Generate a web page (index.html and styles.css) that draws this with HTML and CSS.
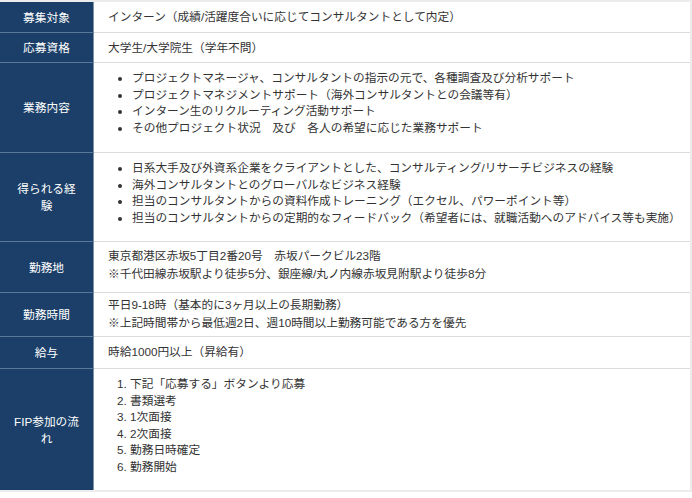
FILE: index.html
```html
<!DOCTYPE html>
<html lang="ja">
<head>
<meta charset="utf-8">
<link rel="stylesheet" href="styles.css">
</head>
<body>
<table class="recruit">
  <tr>
    <th>募集対象</th>
    <td>インターン（成績/活躍度合いに応じてコンサルタントとして内定）</td>
  </tr>
  <tr>
    <th>応募資格</th>
    <td class="short">大学生/大学院生（学年不問）</td>
  </tr>
  <tr>
    <th>業務内容</th>
    <td class="has-list">
      <ul class="list">
        <li>プロジェクトマネージャ、コンサルタントの指示の元で、各種調査及び分析サポート</li>
        <li>プロジェクトマネジメントサポート（海外コンサルタントとの会議等有）</li>
        <li>インターン生のリクルーティング活動サポート</li>
        <li>その他プロジェクト状況　及び　各人の希望に応じた業務サポート</li>
      </ul>
    </td>
  </tr>
  <tr>
    <th>得られる経験</th>
    <td class="has-list tight">
      <ul class="list">
        <li>日系大手及び外資系企業をクライアントとした、コンサルティング/リサーチビジネスの経験</li>
        <li>海外コンサルタントとのグローバルなビジネス経験</li>
        <li>担当のコンサルタントからの資料作成トレーニング（エクセル、パワーポイント等）</li>
        <li>担当のコンサルタントからの定期的なフィードバック（希望者には、就職活動へのアドバイス等も実施）</li>
      </ul>
    </td>
  </tr>
  <tr>
    <th>勤務地</th>
    <td class="place">東京都港区赤坂5丁目2番20号　赤坂パークビル23階<br>※千代田線赤坂駅より徒歩5分、銀座線/丸ノ内線赤坂見附駅より徒歩8分</td>
  </tr>
  <tr>
    <th>勤務時間</th>
    <td class="hours">平日9-18時（基本的に3ヶ月以上の長期勤務）<br>※上記時間帯から最低週2日、週10時間以上勤務可能である方を優先</td>
  </tr>
  <tr>
    <th>給与</th>
    <td class="pay">時給1000円以上（昇給有）</td>
  </tr>
  <tr>
    <th>FIP参加の流れ</th>
    <td class="has-list tight">
      <ol class="list numbered">
        <li>下記「応募する」ボタンより応募</li>
        <li>書類選考</li>
        <li>1次面接</li>
        <li>2次面接</li>
        <li>勤務日時確定</li>
        <li>勤務開始</li>
      </ol>
    </td>
  </tr>
</table>
</body>
</html>
```

FILE: styles.css
```css
html, body {
  margin: 0;
  padding: 0;
  background: #fff;
}

.recruit {
  width: 692px;
  border-collapse: collapse;
  border-top: 2px solid #ececec;
  border-right: 2px solid #ececec;
  border-bottom: 2px solid #ececec;
  font-family: "Liberation Sans", "Noto Sans CJK JP", sans-serif;
  font-size: 11.7px;
  color: #333;
}

.recruit th {
  width: 65px;
  padding: 6px 14px 6px;
  background: #1b3f68;
  color: #fff;
  font-size: 11.7px;
  font-weight: normal;
  text-align: center;
  vertical-align: middle;
  line-height: 17px;
  border-bottom: 1px solid #5a7898;
  border-right: 1px solid #7f93a8;
}

.recruit td {
  padding: 6px 14px 7px;
  line-height: 17px;
  vertical-align: middle;
  border-bottom: 1px solid #dcdcdc;
}

.recruit tr:last-child th,
.recruit tr:last-child td {
  border-bottom: none;
}

.recruit td.short {
  padding-bottom: 6px;
}

.recruit td.pay {
  padding-bottom: 8px;
}

.recruit td.has-list {
  padding-top: 7px;
  padding-bottom: 6px;
}

.recruit td.tight {
  padding-bottom: 5px;
}

.recruit td.place {
  padding-top: 5px;
  padding-bottom: 9px;
  line-height: 18px;
}

.recruit td.hours {
  padding-top: 3px;
  padding-bottom: 4px;
  line-height: 18px;
}

.list {
  margin: 0 0 10px;
  padding-left: 24px;
  line-height: 16.5px;
}

.numbered {
  padding-left: 22px;
}
```
